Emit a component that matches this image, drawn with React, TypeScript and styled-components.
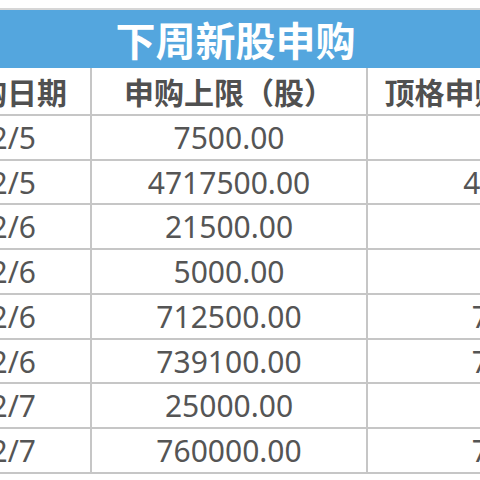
import React from 'react';
import styled, { createGlobalStyle } from 'styled-components';

const GlobalStyle = createGlobalStyle`
  html, body {
    margin: 0;
    padding: 0;
    background: #ffffff;
  }
`;

const Page = styled.div`
  width: 480px;
  height: 480px;
  padding-top: 8px;
  box-sizing: border-box;
  overflow: hidden;
  background: #ffffff;
  font-family: "Noto Sans", "Noto Sans CJK SC", sans-serif;
`;

const TitleBar = styled.div`
  height: 58px;
  border-top: 2px solid #d6d6d6;
  background: #54a6de;
  padding-right: 9px;
  display: flex;
  align-items: center;
  justify-content: center;
  color: #ffffff;
  font-family: "Noto Sans CJK SC", sans-serif;
  font-size: 40px;
  font-weight: 700;
`;

/* the table is wider than the view; its outer columns are cut by the page edge */
const Table = styled.div`
  width: 815px;
  margin-left: -77px;
  display: grid;
  grid-template-columns: 167px 274px 370px;
  grid-template-rows: 46px 43px 42px 43px 43px 43px 42px 43px 43px;
  gap: 2px;
  padding-bottom: 2px;
  background: #c6c6c6;
`;

const Cell = styled.div<{ $align?: 'center' | 'end'; $padRight?: number; $head?: boolean }>`
  background: #ffffff;
  display: flex;
  align-items: center;
  justify-content: ${(p) => (p.$align === 'end' ? 'flex-end' : 'center')};
  padding-right: ${(p) => p.$padRight ?? 0}px;
  overflow: hidden;
  white-space: nowrap;
  color: ${(p) => (p.$head ? '#505050' : '#555555')};
  font-size: 30px;
  font-weight: ${(p) => (p.$head ? 700 : 400)};
  font-family: ${(p) =>
    p.$head ? '"Noto Sans CJK SC", sans-serif' : '"Noto Sans", "Noto Sans CJK SC", sans-serif'};
`;

const rows = [
  { date: '2021/2/5', limit: '7500.00', value: '75000.00' },
  { date: '2021/2/5', limit: '4717500.00', value: '47175000.00' },
  { date: '2021/2/6', limit: '21500.00', value: '215000.00' },
  { date: '2021/2/6', limit: '5000.00', value: '50000.00' },
  { date: '2021/2/6', limit: '712500.00', value: '7125000.00' },
  { date: '2021/2/6', limit: '739100.00', value: '7391000.00' },
  { date: '2021/2/7', limit: '25000.00', value: '250000.00' },
  { date: '2021/2/7', limit: '760000.00', value: '7600000.00' },
];

export default function App() {
  return (
    <Page>
      <GlobalStyle />
      <TitleBar>下周新股申购</TitleBar>
      <Table>
        <Cell $head $align="end" $padRight={23}>申购日期</Cell>
        <Cell $head>申购上限（股）</Cell>
        <Cell $head $padRight={7}>顶格申购需配市值（元）</Cell>
        {rows.map((r, i) => (
          <React.Fragment key={i}>
            <Cell $align="end" $padRight={54}>{r.date}</Cell>
            <Cell>{r.limit}</Cell>
            <Cell>{r.value}</Cell>
          </React.Fragment>
        ))}
      </Table>
    </Page>
  );
}
